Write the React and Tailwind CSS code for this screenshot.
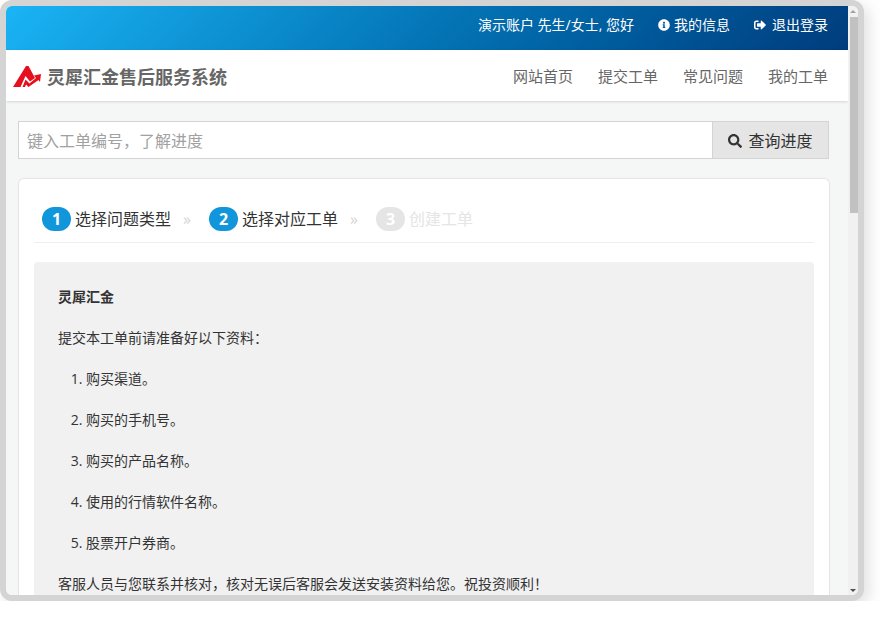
import React from "react";
import { FaInfoCircle, FaSearch, FaSignOutAlt } from "react-icons/fa";

const font = { fontFamily: '"Open Sans", "Noto Sans CJK SC", sans-serif' };

function Logo() {
  return (
    <svg width="28" height="22" viewBox="0 0 28 22" className="shrink-0">
      <path d="M0 21 L13 0 L15.5 0 L22 12 L17 15.5 L12.5 10 L7.5 21 Z" fill="#e60f1e" />
      <path d="M9.5 21 L12.5 13.5 L16.5 17.5 L23 12 L21 9.5 L28 8 L27 16 L25.5 14 L15.5 21 L13 18.5 L12 21 Z" fill="#e60f1e" />
    </svg>
  );
}

function Step({ n, label, active, arrow }) {
  return (
    <div className="flex items-center">
      <span className={`w-[29px] h-6 rounded-full flex items-center justify-center text-base font-bold text-white ${active ? "bg-[#1296db]" : "bg-neutral-200"}`}>
        {n}
      </span>
      <span className={`ml-1 text-base ${active ? "text-[#333]" : "text-neutral-200"}`}>{label}</span>
      {arrow && <span className="w-9.5 pl-3 text-base text-neutral-300">»</span>}
    </div>
  );
}

export default function App() {
  return (
    <div className="w-[864px] h-[601px] border-6 border-[#d4d4d4] rounded-xl overflow-hidden flex shadow-[5px_5px_15px_rgba(0,0,0,0.12)] bg-white" style={font}>
      <div className="flex-1 min-w-0 flex flex-col bg-[#f5f7f7]">
        <div className="h-11 shrink-0 flex items-center justify-end gap-6 pr-5 pb-1.5 text-sm text-white bg-linear-135 from-[#1ab4f5] to-[#003c7d]">
          <span>演示账户 先生/女士, 您好</span>
          <span className="flex items-center gap-1"><FaInfoCircle className="text-xs" />我的信息</span>
          <span className="flex items-center gap-1.5"><FaSignOutAlt className="text-xs" />退出登录</span>
        </div>
        <div className="h-[51px] shrink-0 bg-white shadow flex items-center justify-between pt-0.5 pl-[7px] pr-5">
          <div className="flex items-center gap-1.5">
            <Logo />
            <span className="text-lg font-bold text-[#666]">灵犀汇金售后服务系统</span>
          </div>
          <div className="flex items-center gap-[25px] text-[15px] text-[#666]">
            <span>网站首页</span>
            <span>提交工单</span>
            <span>常见问题</span>
            <span>我的工单</span>
          </div>
        </div>
        <div className="flex-1 min-h-0 pt-5 pl-3 pr-[18px] flex flex-col">
          <div className="flex h-9.5 shrink-0 mr-px text-base">
            <div className="flex-1 border border-neutral-300 bg-white flex items-center px-2 pt-0.5 text-neutral-400">键入工单编号，了解进度</div>
            <div className="w-29 border border-l-0 border-neutral-300 bg-neutral-200 flex items-center justify-center gap-1.5 pt-0.5 text-[#333]">
              <FaSearch className="text-sm" />查询进度
            </div>
          </div>
          <div className="flex-1 min-h-0 mt-[19px] bg-white border border-b-0 border-neutral-200 rounded-t-md px-[15px] pt-7 flex flex-col">
            <div className="flex items-center px-2 pb-2.75 border-b border-[#eee]">
              <Step n="1" label="选择问题类型" active arrow />
              <Step n="2" label="选择对应工单" active arrow />
              <Step n="3" label="创建工单" />
            </div>
            <div className="flex-1 min-h-0 overflow-hidden mt-[19px] bg-[#f1f1f1] rounded-t px-6 pt-6 text-sm leading-[21px] text-[#333]">
              <p className="mb-5 font-bold">灵犀汇金</p>
              <p className="mb-5">提交本工单前请准备好以下资料：</p>
              <ol className="list-decimal pl-7">
                <li className="mb-5">购买渠道。</li>
                <li className="mb-5">购买的手机号。</li>
                <li className="mb-5">购买的产品名称。</li>
                <li className="mb-5">使用的行情软件名称。</li>
                <li className="mb-5">股票开户券商。</li>
              </ol>
              <p>客服人员与您联系并核对，核对无误后客服会发送安装资料给您。祝投资顺利！</p>
            </div>
          </div>
        </div>
      </div>
      <div className="w-2.5 shrink-0 bg-[#f1f1f1] flex flex-col items-center">
        <svg width="8" height="11" viewBox="0 0 8 11" className="shrink-0"><path d="M4 4 L7 7 L1 7 Z" fill="#a3a3a3" /></svg>
        <div className="w-2 h-[196px] bg-[#c1c1c1] ml-0.5" />
        <div className="flex-1" />
        <svg width="8" height="8" viewBox="0 0 8 8" className="shrink-0"><path d="M1 2 L7 2 L4 5 Z" fill="#505050" /></svg>
      </div>
    </div>
  );
}
